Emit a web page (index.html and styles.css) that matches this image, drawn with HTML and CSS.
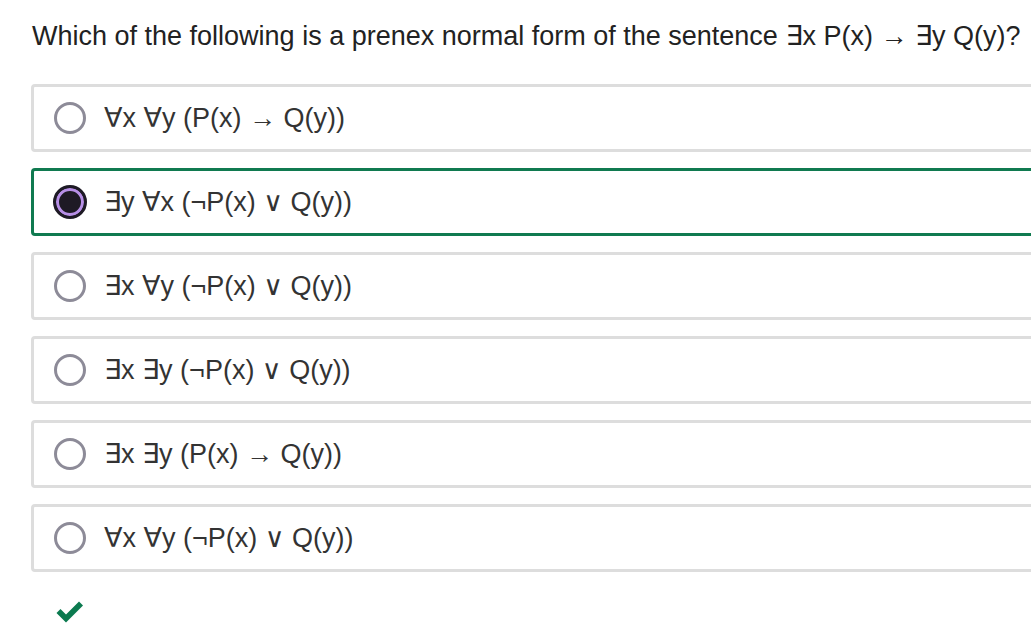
FILE: index.html
```html
<!DOCTYPE html>
<html>
<head>
<meta charset="utf-8">
<link rel="stylesheet" href="styles.css">
</head>
<body>
<div class="quiz">
  <p class="question">Which of the following is a prenex normal form of the sentence ∃x P(x) → ∃y Q(y)?</p>
  <div class="options">
    <label class="option"><span class="radio"></span><span class="text">∀x ∀y (P(x) → Q(y))</span></label>
    <label class="option selected"><span class="radio"></span><span class="text">∃y ∀x (¬P(x) ∨ Q(y))</span></label>
    <label class="option"><span class="radio"></span><span class="text">∃x ∀y (¬P(x) ∨ Q(y))</span></label>
    <label class="option"><span class="radio"></span><span class="text">∃x ∃y (¬P(x) ∨ Q(y))</span></label>
    <label class="option"><span class="radio"></span><span class="text">∃x ∃y (P(x) → Q(y))</span></label>
    <label class="option"><span class="radio"></span><span class="text">∀x ∀y (¬P(x) ∨ Q(y))</span></label>
  </div>
  <div class="result">
    <svg width="30" height="23" viewBox="0 0 30 23"><path d="M1.5 13 L5.5 9 L11 14.5 L24 1.5 L28 5.5 L11 22.5 Z" fill="#0b7a4f"/></svg>
  </div>
</div>
</body>
</html>
```

FILE: styles.css
```css
html, body {
  margin: 0;
  padding: 0;
  overflow: hidden;
  background: #fff;
}
body {
  font-family: "Liberation Sans", Arial, "DejaVu Sans", sans-serif;
  color: #333;
}
.quiz {
  padding-left: 31px;
}
.question {
  margin: 0;
  padding-top: 20px;
  font-size: 27px;
  line-height: 32px;
  color: #222;
  white-space: nowrap;
  padding-left: 1px;
}
.options {
  margin-top: 32px;
  display: flex;
  flex-direction: column;
  gap: 16px;
  width: 1040px;
}
.option {
  box-sizing: border-box;
  height: 68px;
  border: 3px solid #dddddd;
  border-radius: 4px;
  display: flex;
  align-items: center;
  padding-left: 20px;
}
.option.selected {
  border-color: #107a50;
}
.radio {
  box-sizing: border-box;
  width: 32px;
  height: 32px;
  border-radius: 50%;
  border: 3px solid #8d8b98;
  flex: none;
  margin-right: 18px;
}
.selected .radio {
  width: 34px;
  height: 34px;
  margin-left: -1px;
  margin-right: 17px;
  border: 3px solid #1e1a25;
  background: #1e1a25;
  box-shadow: inset 0 0 0 3px #b78fe6;
}
.text {
  font-size: 27px;
  line-height: 32px;
  color: #333;
  white-space: nowrap;
}
.result {
  padding-top: 28px;
  padding-left: 24px;
}
.result svg {
  display: block;
}
```
